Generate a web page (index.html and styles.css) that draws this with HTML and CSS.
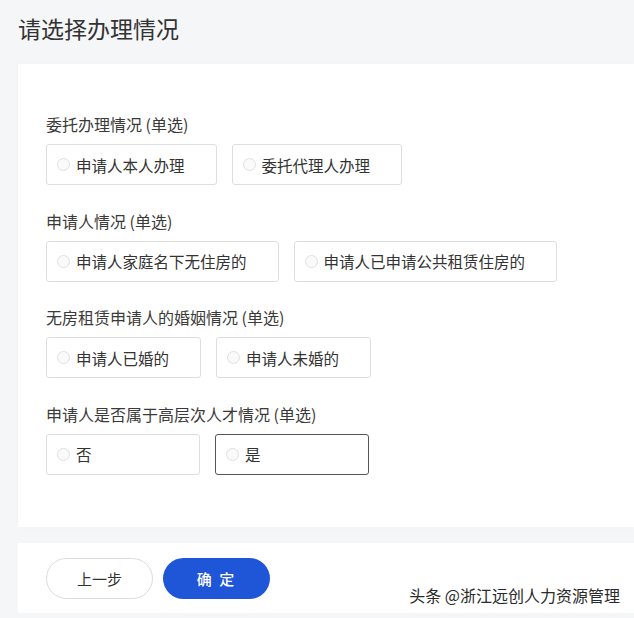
FILE: index.html
```html
<!DOCTYPE html>
<html lang="zh-CN">
<head>
<meta charset="UTF-8">
<meta name="viewport" content="width=device-width, initial-scale=1.0">
<title>请选择办理情况</title>
<link rel="stylesheet" href="styles.css">
</head>
<body>
    <h1 class="page-title">请选择办理情况</h1>

    <div class="card">
        <!-- 委托办理情况 -->
        <div class="group">
            <div class="group-label">委托办理情况 (单选)</div>
            <div class="options">
                <label class="option"><span class="radio"></span>申请人本人办理</label>
                <label class="option"><span class="radio"></span>委托代理人办理</label>
            </div>
        </div>

        <!-- 申请人情况 -->
        <div class="group">
            <div class="group-label">申请人情况 (单选)</div>
            <div class="options">
                <label class="option"><span class="radio"></span>申请人家庭名下无住房的</label>
                <label class="option"><span class="radio"></span>申请人已申请公共租赁住房的</label>
            </div>
        </div>

        <!-- 婚姻情况 -->
        <div class="group">
            <div class="group-label">无房租赁申请人的婚姻情况 (单选)</div>
            <div class="options">
                <label class="option"><span class="radio"></span>申请人已婚的</label>
                <label class="option"><span class="radio"></span>申请人未婚的</label>
            </div>
        </div>

        <!-- 高层次人才 -->
        <div class="group">
            <div class="group-label">申请人是否属于高层次人才情况 (单选)</div>
            <div class="options">
                <label class="option"><span class="radio"></span>否</label>
                <label class="option focused"><span class="radio"></span>是</label>
            </div>
        </div>
    </div>

    <div class="footer">
        <button class="btn btn-back">上一步</button>
        <button class="btn btn-ok">确 定</button>
    </div>

    <div class="watermark">头条 @浙江远创人力资源管理</div>
</body>
</html>
```

FILE: styles.css
```css
body, html {
    margin: 0;
    padding: 0;
    background: #f5f6f8;
    font-family: "Noto Sans CJK SC", "Liberation Sans", sans-serif;
    color: #333;
    overflow: hidden;
}

body {
    position: relative;
    height: 618px;
}

.page-title {
    margin: 13px 0 0 18px;
    font-size: 23px;
    font-weight: normal;
    line-height: 30px;
    color: #333;
}

.card {
    margin: 21px 0 0 18px;
    padding: 49px 28px 52px;
    background: #fff;
    box-shadow: 0 0 6px rgba(0, 0, 0, 0.02);
}

.group {
    margin-bottom: 24.5px;
}

.group:last-child {
    margin-bottom: 0;
}

.group-label {
    font-size: 16px;
    line-height: 22px;
    margin-bottom: 9px;
    color: #3a3a3a;
}

.options {
    display: flex;
    gap: 15px;
}

.option {
    box-sizing: border-box;
    display: flex;
    align-items: center;
    gap: 6px;
    height: 41px;
    min-width: 154px;
    padding: 0 31px 0 10px;
    border: 1px solid #dedede;
    border-radius: 3px;
    font-size: 15.5px;
    color: #333;
    background: #fff;
}

.option.focused {
    border-color: #555;
}

.radio {
    width: 11px;
    height: 11px;
    border: 1px solid #e0e0e0;
    border-radius: 50%;
    background: #fafafa;
    flex-shrink: 0;
}

.footer {
    display: flex;
    gap: 10px;
    margin: 16px 0 0 18px;
    padding: 15px 28px 14px;
    background: #fff;
}

.btn {
    width: 107px;
    height: 41px;
    border-radius: 21px;
    font-family: inherit;
    font-size: 15px;
    cursor: pointer;
}

.btn-back {
    background: #fff;
    border: 1px solid #dcdcdc;
    color: #333;
}

.btn-ok {
    background: #1f55d7;
    border: none;
    color: #fff;
    font-weight: 500;
    letter-spacing: 2px;
}

.watermark {
    position: absolute;
    right: 14px;
    top: 584px;
    font-size: 16px;
    line-height: 22px;
    color: #2a2a2a;
    text-shadow: 1px 1px 0 #fff, -1px -1px 0 #fff, 1px -1px 0 #fff, -1px 1px 0 #fff;
}
```
